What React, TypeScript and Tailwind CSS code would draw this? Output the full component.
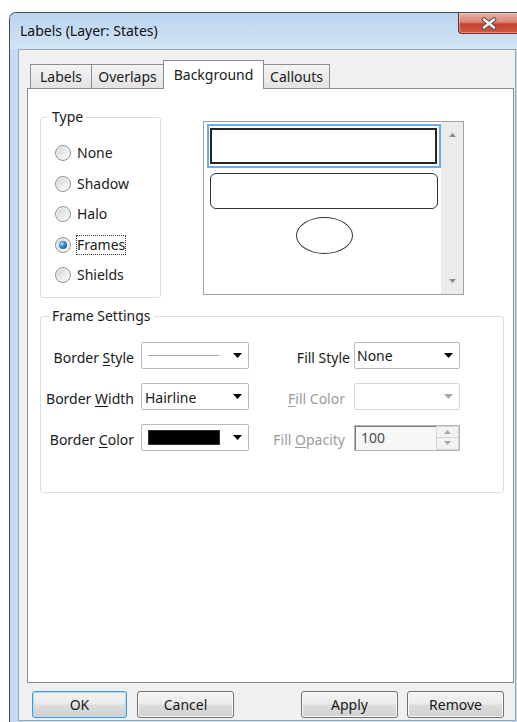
import React from 'react';

type RadioProps = { label: string; checked?: boolean; focused?: boolean };

function DownArrow({ color = '#000' }: { color?: string }) {
  return (
    <svg width="9" height="5" viewBox="0 0 9 5" className="block">
      <polygon points="0,0 9,0 4.5,5" fill={color} />
    </svg>
  );
}

function SmallArrow({ up, color = '#8a8a8a' }: { up?: boolean; color?: string }) {
  return (
    <svg width="7" height="4" viewBox="0 0 7 4" className="block">
      <polygon points={up ? '0,4 7,4 3.5,0' : '0,0 7,0 3.5,4'} fill={color} />
    </svg>
  );
}

function Radio({ label, checked, focused }: RadioProps) {
  return (
    <div className="flex h-[30.5px] items-center pl-[14px]">
      <span className="flex h-[16px] w-[16px] items-center justify-center rounded-full border border-[#8e9194] bg-[linear-gradient(135deg,#cfcfcf_0%,#eeeeee_60%,#fbfbfb_100%)] shadow-[inset_0_0_0_1px_#f6f6f6]">
        {checked && (
          <span className="h-[8px] w-[8px] rounded-full bg-[radial-gradient(circle_at_35%_35%,#a8e2ff_0%,#2f8fcc_40%,#0d4169_100%)]" />
        )}
      </span>
      <span
        className={`ml-[5px] border leading-[18px] ${
          focused ? 'border-dotted border-[#3a3a3a]' : 'border-transparent'
        }`}
      >
        {label}
      </span>
    </div>
  );
}

function Combo({
  children,
  disabled,
  width,
}: {
  children?: React.ReactNode;
  disabled?: boolean;
  width: string;
}) {
  return (
    <div
      className={`flex h-[27px] items-center rounded-[2px] border bg-white pr-[6px] ${width} ${
        disabled ? 'border-[#d9d9d9]' : 'border-[#b9b9b9]'
      }`}
    >
      <div className="flex min-w-0 flex-1 items-center">{children}</div>
      <DownArrow color={disabled ? '#a8a8a8' : '#000'} />
    </div>
  );
}

function Button({ label, primary, width, className = '' }: { label: string; primary?: boolean; width: string; className?: string }) {
  return (
    <div
      className={`flex h-[27px] items-center justify-center rounded-[3px] border bg-[linear-gradient(to_bottom,#f3f3f3_0%,#ebebeb_48%,#dddddd_52%,#d0d0d0_100%)] ${width} ${className} ${
        primary
          ? 'border-[#4a95c9] shadow-[inset_0_0_0_1px_#a6dff7]'
          : 'border-[#707070] shadow-[inset_0_0_0_1px_#fafafa]'
      }`}
    >
      {label}
    </div>
  );
}

function Tab({ label, selected, width, first }: { label: string; selected?: boolean; width: string; first?: boolean }) {
  if (selected) {
    return (
      <div
        className={`relative z-10 -mb-px flex h-[29px] items-center justify-center border border-b-0 border-[#898c95] bg-white pb-[2px] ${width} ${first ? '' : '-ml-px'}`}
      >
        {label}
      </div>
    );
  }
  return (
    <div
      className={`flex h-[24px] items-center justify-center border border-b-0 border-[#898c95] bg-[linear-gradient(to_bottom,#f4f4f4_0%,#ececec_50%,#e2e2e2_100%)] ${width} ${first ? '' : '-ml-px'}`}
    >
      {label}
    </div>
  );
}

export default function App() {
  return (
    <div className="relative h-[722px] w-[517px] overflow-hidden bg-white font-['Noto_Sans',sans-serif] text-[14px] text-[#1a1a1a]">
      {/* window frame */}
      <div className="ml-[9px] mt-[12px] flex h-[720px] w-[520px] flex-col rounded-tl-[7px] border-l border-t border-[#47515c] bg-[#c4dbf3]">
        {/* title bar */}
        <div className="flex h-[36px] items-start rounded-tl-[6px] bg-[linear-gradient(to_bottom,#bcd4ee_0%,#c6dcf2_50%,#d2e4f6_100%)]">
          <span className="self-center pl-[10px] leading-[18px] text-[#111]">Labels (Layer: States)</span>
          <div className="ml-auto mr-[9px] flex h-[21px] w-[62px] items-center justify-center rounded-b-[4px] border border-t-0 border-[#7b2b1f] bg-[linear-gradient(to_bottom,#eab0a3_0%,#d98878_45%,#c4412c_55%,#cf5b44_100%)] shadow-[inset_0_0_0_1px_rgba(255,220,210,0.45)]">
            <svg width="16" height="13" viewBox="0 0 16 13" className="block">
              <path d="M3 2.5 L13 10.5 M13 2.5 L3 10.5" stroke="#5a4a48" strokeWidth="4.6" strokeLinecap="round" />
              <path d="M3 2.5 L13 10.5 M13 2.5 L3 10.5" stroke="#f4f4f4" strokeWidth="2.6" strokeLinecap="round" />
            </svg>
          </div>
        </div>

        {/* client area */}
        <div className="ml-[8px] flex h-[672px] w-[498px] flex-col border border-[#9ba5b0] bg-[#f0f0f0] pl-[8px] pt-[10px]">
          {/* tabs */}
          <div className="ml-[3px] flex h-[28px] items-end">
            <Tab label="Labels" width="w-[62px]" first />
            <Tab label="Overlaps" width="w-[73px]" />
            <Tab label="Background" width="w-[101px]" selected />
            <Tab label="Callouts" width="w-[67px]" />
          </div>

          {/* tab page */}
          <div className="flex h-[595px] w-[487px] flex-col border border-[#898c95] bg-white pl-[12px]">
            <div className="mt-[19px] flex items-start">
              <fieldset className="h-[190px] w-[121px] rounded-[3px] border border-[#d5dfe5]">
                <legend className="ml-[8px] px-[3px] leading-[18px]">Type</legend>
                <div className="pt-[12px]">
                  <Radio label="None" />
                  <Radio label="Shadow" />
                  <Radio label="Halo" />
                  <Radio label="Frames" checked focused />
                  <Radio label="Shields" />
                </div>
              </fieldset>

              {/* frame preview list */}
              <div className="ml-[42px] mt-[13px] flex h-[174px] w-[261px] border border-[#a3a3a3] bg-white">
                <div className="flex-1 pl-[3px] pt-[2px]">
                  <div className="h-[44px] w-[234px] border-2 border-[#69ade9] pb-[2px] pl-[1px] pr-[2px] pt-[2px]">
                    <div className="h-full w-full border-2 border-[#262626]" />
                  </div>
                  <div className="ml-[3px] mt-[5px] h-[36px] w-[228px] rounded-[6px] border-[1.5px] border-[#333]" />
                  <div className="ml-[3px] mt-[8px] flex w-[228px] justify-center">
                    <div className="h-[37px] w-[57px] rounded-[50%] border-[1.5px] border-[#333]" />
                  </div>
                </div>
                <div className="flex w-[22px] flex-col items-center justify-between bg-[#ebebeb] py-[11px]">
                  <SmallArrow up />
                  <SmallArrow />
                </div>
              </div>
            </div>

            <fieldset className="mt-[9px] h-[186px] w-[464px] rounded-[3px] border border-[#d5dfe5]">
              <legend className="ml-[8px] px-[3px] leading-[18px]">Frame Settings</legend>
              <div className="flex flex-col gap-[14px] pt-[17px]">
                <div className="flex h-[27px] items-center">
                  <span className="w-[93px] pt-[3px] text-right">
                    Border <span className="underline underline-offset-[2px]">S</span>tyle
                  </span>
                  <div className="ml-[7px]">
                    <Combo width="w-[108px]">
                      <div className="ml-[6px] h-px w-[71px] bg-[#a8a8a8]" />
                    </Combo>
                  </div>
                  <span className="w-[101px] pt-[3px] text-right">Fill Style</span>
                  <div className="ml-[4px]">
                    <Combo width="w-[106px]">
                      <span className="pl-[2px]">None</span>
                    </Combo>
                  </div>
                </div>

                <div className="flex h-[27px] items-center">
                  <span className="w-[93px] pt-[3px] text-right">
                    Border <span className="underline underline-offset-[2px]">W</span>idth
                  </span>
                  <div className="ml-[7px]">
                    <Combo width="w-[108px]">
                      <span className="pl-[3px] pt-[1px]">Hairline</span>
                    </Combo>
                  </div>
                  <span className="w-[101px] pr-[5px] pt-[3px] text-right text-[#9b9b9b]">
                    <span className="underline underline-offset-[2px]">F</span>ill Color
                  </span>
                  <div className="ml-[4px]">
                    <Combo width="w-[106px]" disabled />
                  </div>
                </div>

                <div className="flex h-[27px] items-center">
                  <span className="w-[93px] pt-[3px] text-right">
                    Border <span className="underline underline-offset-[2px]">C</span>olor
                  </span>
                  <div className="ml-[7px]">
                    <Combo width="w-[108px]">
                      <div className="ml-[6px] h-[15px] w-[72px] border border-[#333] bg-black" />
                    </Combo>
                  </div>
                  <span className="w-[101px] pr-[5px] pt-[3px] text-right text-[#9b9b9b]">
                    Fill <span className="underline underline-offset-[2px]">O</span>pacity
                  </span>
                  <div className="ml-[4px] flex h-[26px] w-[106px] items-stretch border border-[#b4b4b4] bg-[#f7f7f7] shadow-[inset_1px_1px_0_#7c7c7c]">
                    <span className="flex flex-1 items-center pl-[6px] text-[#4d4d4d]">100</span>
                    <div className="flex w-[23px] flex-col">
                      <div className="flex flex-1 items-center justify-center border border-[#d4d4d4] bg-[#f2f2f2]">
                        <SmallArrow up color="#a6a6a6" />
                      </div>
                      <div className="flex flex-1 items-center justify-center border border-t-0 border-[#d4d4d4] bg-[#f2f2f2]">
                        <SmallArrow color="#a6a6a6" />
                      </div>
                    </div>
                  </div>
                </div>
              </div>
            </fieldset>
          </div>

          {/* dialog buttons */}
          <div className="mt-[8px] flex pl-[5px]">
            <Button label="OK" width="w-[95px]" primary />
            <Button label="Cancel" width="w-[97px]" className="ml-[10px]" />
            <Button label="Apply" width="w-[97px]" className="ml-[67px]" />
            <Button label="Remove" width="w-[97px]" className="ml-[9px]" />
          </div>
        </div>
      </div>
    </div>
  );
}
